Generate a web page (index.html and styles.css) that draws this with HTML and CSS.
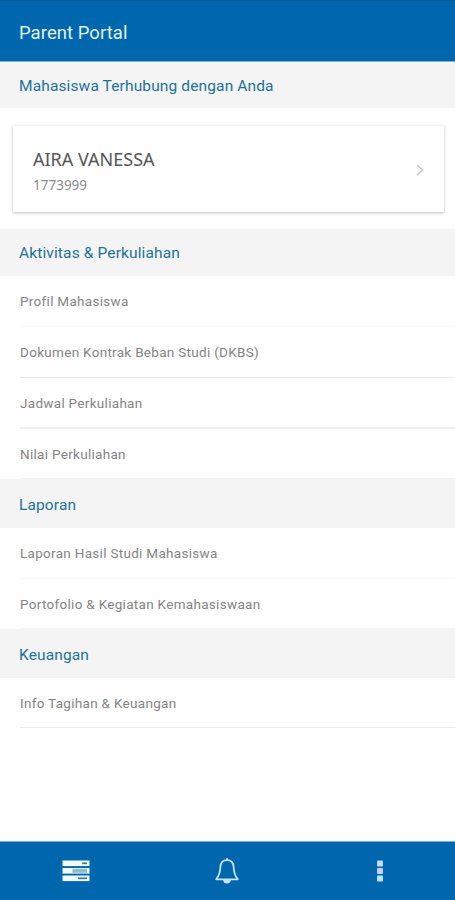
FILE: index.html
```html
<!DOCTYPE html>
<html lang="id">
<head>
    <meta charset="UTF-8">
    <meta name="viewport" content="width=device-width, initial-scale=1.0">
    <title>Parent Portal</title>
    <link rel="stylesheet" href="styles.css">
</head>
<body>
<div class="app">
    <header class="topbar">
        <h1>Parent Portal</h1>
    </header>

    <main class="content">
        <h2 class="section first"><span>Mahasiswa Terhubung dengan Anda</span></h2>
        <div class="student">
            <div class="info">
                <div class="name">AIRA VANESSA</div>
                <div class="nrp">1773999</div>
            </div>
            <svg class="arrow" viewBox="0 0 8 12">
                <polyline points="1,1 6.5,6 1,11"/>
            </svg>
        </div>

        <h2 class="section activity"><span>Aktivitas &amp; Perkuliahan</span></h2>
        <ul class="menu">
            <li class="faint"><span>Profil Mahasiswa</span></li>
            <li><span>Dokumen Kontrak Beban Studi (DKBS)</span></li>
            <li class="thick"><span>Jadwal Perkuliahan</span></li>
            <li class="last"><span>Nilai Perkuliahan</span></li>
        </ul>

        <h2 class="section"><span>Laporan</span></h2>
        <ul class="menu">
            <li class="faint"><span>Laporan Hasil Studi Mahasiswa</span></li>
            <li class="last"><span>Portofolio &amp; Kegiatan Kemahasiswaan</span></li>
        </ul>

        <h2 class="section"><span>Keuangan</span></h2>
        <ul class="menu">
            <li class="bill"><span>Info Tagihan &amp; Keuangan</span></li>
        </ul>
    </main>

    <nav class="tabbar">
        <a class="tab">
            <svg width="28" height="22" viewBox="0 0 28 22">
                <rect x="0.5" y="0.5" width="27" height="5.6" fill="#f1fbfd"/>
                <rect x="0.5" y="8" width="27" height="5.6" fill="#f1fbfd"/>
                <rect x="0.5" y="15.5" width="27" height="5.6" fill="#f1fbfd"/>
                <rect x="20" y="2.4" width="5" height="1.8" fill="#3c8196"/>
                <rect x="10.5" y="8.8" width="14.5" height="4" fill="#8fbfca"/>
                <rect x="16" y="17.4" width="9" height="1.8" fill="#3c8196"/>
            </svg>
        </a>
        <a class="tab">
            <svg width="26" height="28" viewBox="0 0 26 28">
                <path class="bell" d="M13 3.2 C8.8 3.2 6.6 6.2 6.4 10 C6.2 14.5 5.6 18.2 2.2 22.3 H23.8 C20.4 18.2 19.8 14.5 19.6 10 C19.4 6.2 17.2 3.2 13 3.2 Z"/>
                <path class="bell" d="M13 3.2 V1.8"/>
                <path d="M9 23 H17 C16.6 25.3 15.2 26.6 13 26.6 C10.8 26.6 9.4 25.3 9 23 Z" fill="#c9e1ff"/>
            </svg>
        </a>
        <a class="tab">
            <svg width="8" height="22" viewBox="0 0 8 22">
                <rect x="1" y="0.5" width="6" height="6" rx="1" fill="#c5dcfa"/>
                <rect x="1" y="8" width="6" height="6" rx="1" fill="#c9cdfa"/>
                <rect x="1" y="15.5" width="6" height="6" rx="1" fill="#bfe3fa"/>
            </svg>
        </a>
    </nav>
</div>
</body>
</html>
```
FILE: styles.css
```css
* {
    box-sizing: border-box;
}

body {
    margin: 0;
    background-color: #fefefe;
    font-family: Roboto, sans-serif;
}

.app {
    display: flex;
    flex-direction: column;
    height: 100vh;
}

.topbar {
    display: flex;
    align-items: center;
    height: 62px;
    padding: 4px 19px 0;
    background-color: #0067ae;
    border-top: 1px solid #075c98;
    border-bottom: 1px solid #80b0d0;
}

h1 {
    margin: 0;
    color: #e0f3fb;
    font-size: 18.5px;
    font-weight: 400;
    letter-spacing: 0.05px;
}

.content {
    flex: 1;
}

.section {
    display: flex;
    align-items: center;
    height: 49px;
    margin: 0;
    padding: 2px 19px 0;
    background-color: #f4f4f4;
    color: #1c7299;
    font-size: 15.5px;
    font-weight: 400;
    letter-spacing: 0.13px;
}
.section.first {
    height: 46px;
}
.section.activity {
    height: 47px;
    padding-top: 1px;
}

.student {
    display: flex;
    align-items: center;
    justify-content: space-between;
    height: 86px;
    margin: 18px 11px 17px 13px;
    padding: 2px 20px 0 20px;
    background-color: #fefefe;
    box-shadow: 0 1px 3px rgba(0, 0, 0, 0.24);
}
.info {
    padding-top: 4px;
}
.name {
    color: #555;
    font-family: "Noto Sans", sans-serif;
    font-size: 18px;
    line-height: 25px;
}
.nrp {
    color: #8c8c8c;
    font-family: "Noto Sans", sans-serif;
    font-size: 13.5px;
    line-height: 26px;
}
.arrow {
    width: 8px;
    height: 12px;
}
.arrow polyline {
    fill: none;
    stroke: #c8c8c8;
    stroke-width: 1.6px;
}

.menu {
    margin: 0;
    padding: 0 0 0 20px;
    list-style: none;
}
.menu li {
    display: flex;
    align-items: center;
    height: 51px;
    border-bottom: 1px solid #ebebeb;
    color: #858585;
    font-size: 13.5px;
    letter-spacing: 0.3px;
}
.menu .faint {
    border-color: #fafafa;
}
.menu .thick {
    border-bottom: 2px solid #efefef;
}
.menu .last {
    height: 50px;
    border-color: #f4f4f4;
}
.menu .bill {
    height: 50px;
}

.tabbar {
    display: grid;
    grid-template-columns: repeat(3, 1fr);
    height: 59px;
    background-color: #0067ae;
    border-top: 1px solid #80b0d0;
}
.tab {
    display: flex;
    align-items: center;
    justify-content: center;
}
.tab:last-child {
    padding-left: 2px;
}
.bell {
    fill: none;
    stroke: #c9e1ff;
    stroke-width: 1.8px;
    stroke-linejoin: round;
    stroke-linecap: round;
}
```
